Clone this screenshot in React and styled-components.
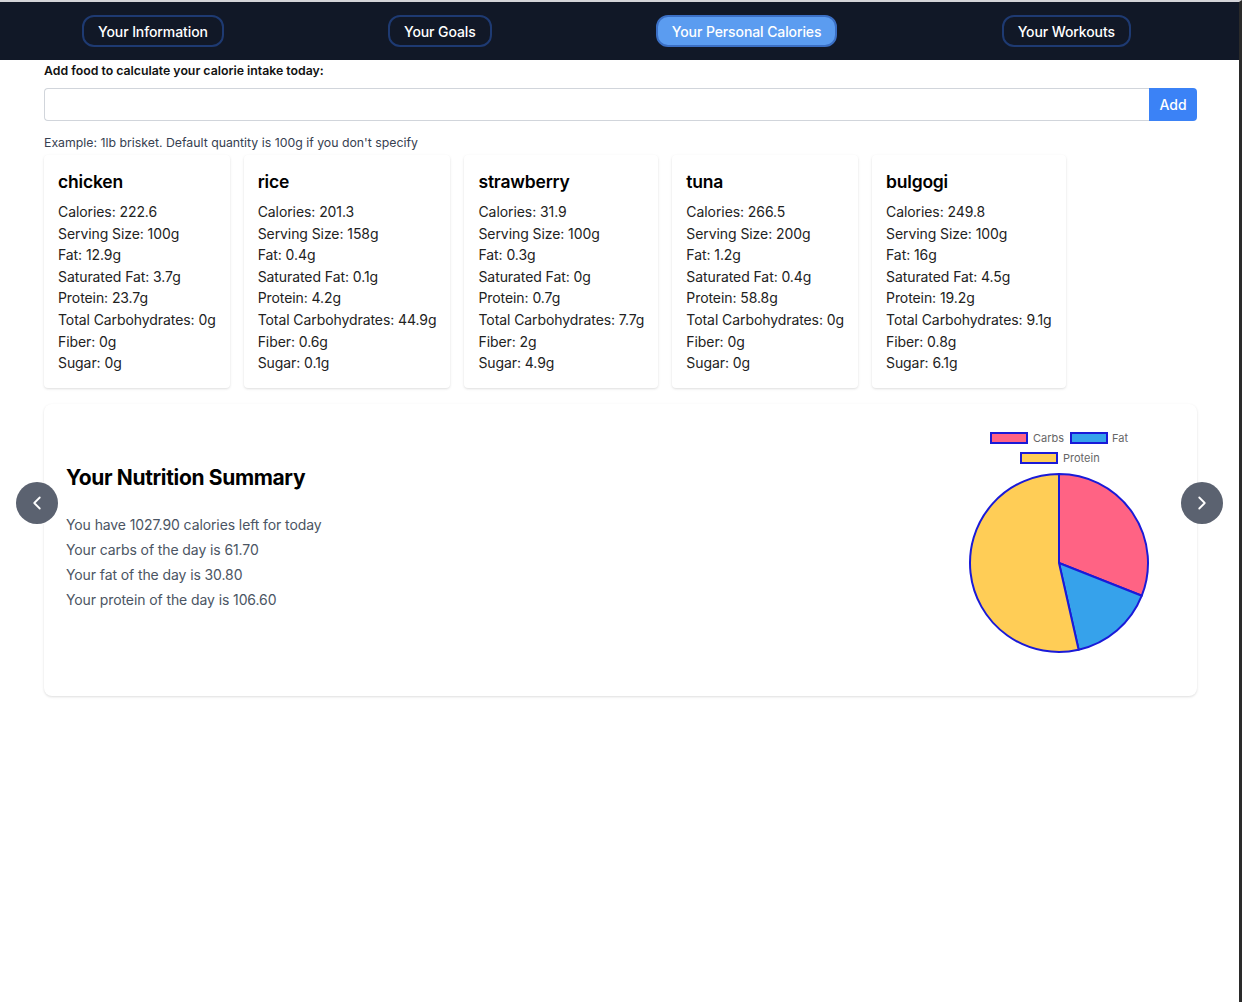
import React from "react";
import styled, { createGlobalStyle } from "styled-components";

const GlobalStyle = createGlobalStyle`
  html, body {
    margin: 0;
    padding: 0;
    background: #ffffff;
  }
  body {
    font-family: Inter, "Noto Sans", "Liberation Sans", sans-serif;
    color: #111827;
  }
  * {
    box-sizing: border-box;
  }
`;

const foods = [
  { name: "chicken", calories: 222.6, serving: "100g", fat: "12.9g", sat: "3.7g", protein: "23.7g", carbs: "0g", fiber: "0g", sugar: "0g" },
  { name: "rice", calories: 201.3, serving: "158g", fat: "0.4g", sat: "0.1g", protein: "4.2g", carbs: "44.9g", fiber: "0.6g", sugar: "0.1g" },
  { name: "strawberry", calories: 31.9, serving: "100g", fat: "0.3g", sat: "0g", protein: "0.7g", carbs: "7.7g", fiber: "2g", sugar: "4.9g" },
  { name: "tuna", calories: 266.5, serving: "200g", fat: "1.2g", sat: "0.4g", protein: "58.8g", carbs: "0g", fiber: "0g", sugar: "0g" },
  { name: "bulgogi", calories: 249.8, serving: "100g", fat: "16g", sat: "4.5g", protein: "19.2g", carbs: "9.1g", fiber: "0.8g", sugar: "6.1g" },
];

const macros = [
  { label: "Carbs", value: 61.7, color: "#ff6384" },
  { label: "Fat", value: 30.8, color: "#36a2eb" },
  { label: "Protein", value: 106.6, color: "#ffcd56" },
];

const tabs = ["Your Information", "Your Goals", "Your Personal Calories", "Your Workouts"];

const PieChart = () => {
  const cx = 100;
  const cy = 135;
  const r = 89;
  const total = macros.reduce((s, m) => s + m.value, 0);
  let angle = -Math.PI / 2;
  const slices = macros.map((m) => {
    const start = angle;
    const end = angle + (m.value / total) * Math.PI * 2;
    angle = end;
    const x1 = cx + r * Math.cos(start);
    const y1 = cy + r * Math.sin(start);
    const x2 = cx + r * Math.cos(end);
    const y2 = cy + r * Math.sin(end);
    const large = end - start > Math.PI ? 1 : 0;
    return {
      ...m,
      d: `M${cx} ${cy} L${x1} ${y1} A${r} ${r} 0 ${large} 1 ${x2} ${y2} Z`,
    };
  });

  return (
    <svg width="200" height="240" viewBox="0 0 200 240">
      <rect x="32" y="5" width="36" height="10" fill="#ff6384" stroke="#1a1ad8" strokeWidth="2" />
      <text x="74" y="14" fontSize="11" fill="#666" fontFamily="Inter, sans-serif">Carbs</text>
      <rect x="112" y="5" width="36" height="10" fill="#36a2eb" stroke="#1a1ad8" strokeWidth="2" />
      <text x="153" y="14" fontSize="11" fill="#666" fontFamily="Inter, sans-serif">Fat</text>
      <rect x="62" y="25" width="36" height="10" fill="#ffcd56" stroke="#1a1ad8" strokeWidth="2" />
      <text x="104" y="34" fontSize="11" fill="#666" fontFamily="Inter, sans-serif">Protein</text>
      {slices.map((s) => (
        <path key={s.label} d={s.d} fill={s.color} stroke="#1a1ad8" strokeWidth="2" strokeLinejoin="round" />
      ))}
    </svg>
  );
};

const App = () => {
  return (
    <Frame>
      <GlobalStyle />
      <NavBar>
        {tabs.map((t) => (
          <NavButton key={t} $active={t === "Your Personal Calories"}>
            {t}
          </NavButton>
        ))}
      </NavBar>
      <Main>
        <FieldLabel>Add food to calculate your calorie intake today:</FieldLabel>
        <InputRow>
          <FoodInput type="text" />
          <AddButton>Add</AddButton>
        </InputRow>
        <Hint>Example: 1lb brisket. Default quantity is 100g if you don't specify</Hint>
        <CardRow>
          {foods.map((f) => (
            <FoodCard key={f.name}>
              <FoodTitle>{f.name}</FoodTitle>
              <FoodLine>Calories: {f.calories}</FoodLine>
              <FoodLine>Serving Size: {f.serving}</FoodLine>
              <FoodLine>Fat: {f.fat}</FoodLine>
              <FoodLine>Saturated Fat: {f.sat}</FoodLine>
              <FoodLine>Protein: {f.protein}</FoodLine>
              <FoodLine>Total Carbohydrates: {f.carbs}</FoodLine>
              <FoodLine>Fiber: {f.fiber}</FoodLine>
              <FoodLine>Sugar: {f.sugar}</FoodLine>
            </FoodCard>
          ))}
        </CardRow>
        <SummaryCard>
          <ArrowButton $side="left" aria-label="previous">
            <svg width="22" height="22" viewBox="0 0 24 24" fill="none" stroke="#fff" strokeWidth="2" strokeLinecap="round" strokeLinejoin="round">
              <path d="M15 18l-6-6 6-6" />
            </svg>
          </ArrowButton>
          <SummaryText>
            <SummaryTitle>Your Nutrition Summary</SummaryTitle>
            <SummaryLine>You have 1027.90 calories left for today</SummaryLine>
            <SummaryLine>Your carbs of the day is 61.70</SummaryLine>
            <SummaryLine>Your fat of the day is 30.80</SummaryLine>
            <SummaryLine>Your protein of the day is 106.60</SummaryLine>
          </SummaryText>
          <PieChart />
          <ArrowButton $side="right" aria-label="next">
            <svg width="22" height="22" viewBox="0 0 24 24" fill="none" stroke="#fff" strokeWidth="2" strokeLinecap="round" strokeLinejoin="round">
              <path d="M9 18l6-6-6-6" />
            </svg>
          </ArrowButton>
        </SummaryCard>
      </Main>
    </Frame>
  );
};

const Frame = styled.div`
  width: 1242px;
  min-height: 1002px;
  border-top: 2px solid #d4d4d8;
  border-right: 3px solid #2a2a2a;
  background: #ffffff;
`;

const NavBar = styled.nav`
  height: 58px;
  background: #111827;
  display: flex;
  align-items: center;
  justify-content: space-around;
  padding: 0 26px 0 0;
`;

const NavButton = styled.button`
  height: 32px;
  padding: 0 14px;
  border-radius: 12px;
  border: 2px solid ${(p) => (p.$active ? "#3b6fc4" : "#1e3a72")};
  background: ${(p) => (p.$active ? "#5b9cf0" : "transparent")};
  color: #ffffff;
  font-family: Inter, sans-serif;
  font-size: 14px;
  font-weight: 500;
  letter-spacing: -0.1px;
  cursor: pointer;
`;

const Main = styled.main`
  padding: 3px 42px 0 44px;
`;

const FieldLabel = styled.div`
  font-size: 12.3px;
  font-weight: 600;
  line-height: 16px;
  color: #111111;
`;

const InputRow = styled.div`
  display: flex;
  margin-top: 9px;
  height: 33px;
`;

const FoodInput = styled.input`
  flex: 1;
  height: 100%;
  border: 1px solid #d1d5db;
  border-right: none;
  border-radius: 4px 0 0 4px;
  outline: none;
`;

const AddButton = styled.button`
  width: 48px;
  height: 100%;
  border: none;
  border-radius: 0 4px 4px 0;
  background: #3b82f6;
  color: #ffffff;
  font-family: Inter, sans-serif;
  font-size: 14px;
  font-weight: 500;
`;

const Hint = styled.div`
  margin-top: 14px;
  font-size: 12.3px;
  line-height: 16px;
  color: #374151;
`;

const CardRow = styled.div`
  display: flex;
  gap: 14px;
  margin-top: 4px;
  align-items: flex-start;
`;

const FoodCard = styled.div`
  padding: 14px;
  border-radius: 4px;
  background: #ffffff;
  box-shadow: 0 1px 3px rgba(0, 0, 0, 0.1), 0 1px 2px rgba(0, 0, 0, 0.04);
`;

const FoodTitle = styled.h3`
  margin: 0 0 6px;
  font-size: 17.5px;
  font-weight: 600;
  line-height: 26px;
  letter-spacing: -0.2px;
  color: #000000;
`;

const FoodLine = styled.div`
  font-size: 14px;
  line-height: 21.6px;
  letter-spacing: -0.08px;
  color: #222222;
  white-space: nowrap;
`;

const SummaryCard = styled.section`
  position: relative;
  margin-top: 16px;
  height: 292px;
  padding: 24px 38px 28px 22px;
  border-radius: 8px;
  background: #ffffff;
  box-shadow: 0 1px 3px rgba(0, 0, 0, 0.1), 0 1px 2px rgba(0, 0, 0, 0.04);
  display: flex;
  align-items: center;
  justify-content: space-between;
`;

const SummaryText = styled.div`
  margin-bottom: 19px;
`;

const SummaryTitle = styled.h2`
  margin: 0 0 20px;
  font-size: 21px;
  font-weight: 700;
  line-height: 28px;
  letter-spacing: -0.35px;
  color: #000000;
`;

const SummaryLine = styled.p`
  margin: 0;
  font-size: 14px;
  line-height: 25px;
  letter-spacing: -0.1px;
  color: #4b5563;
`;

const ArrowButton = styled.button`
  position: absolute;
  top: 78px;
  ${(p) => (p.$side === "left" ? "left: -28px;" : "right: -26px;")}
  width: 42px;
  height: 42px;
  border-radius: 50%;
  border: none;
  background: #5b6270;
  display: flex;
  align-items: center;
  justify-content: center;
  padding: 0;
  cursor: pointer;
`;

export default App;
